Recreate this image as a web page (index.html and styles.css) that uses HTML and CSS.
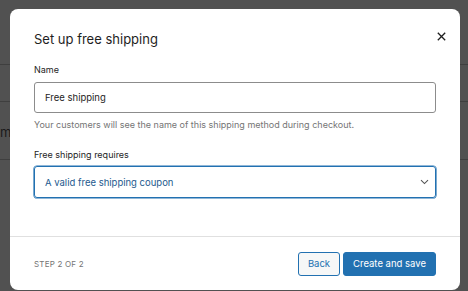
FILE: index.html
```html
<!DOCTYPE html>
<html>
<head>
<meta charset="utf-8">
<link rel="stylesheet" href="styles.css">
</head>
<body>
<div class="page">
  <div class="bg-row bg-r1"></div>
  <div class="bg-row bg-r2"></div>
  <div class="bg-row bg-r3"><span class="bg-clip"><span class="bg-text">method</span></span></div>
  <div class="bg-row bg-r4"></div>
</div>
<div class="overlay">
  <div class="modal" role="dialog">
    <div class="modal-header">
      <h1 class="modal-title">Set up free shipping</h1>
      <button class="close" aria-label="Close">
        <svg width="9" height="9" viewBox="0 0 9 9"><path d="M0.8 0.8L8.2 8.2M8.2 0.8L0.8 8.2" stroke="#1e1e1e" stroke-width="1.3" fill="none"/></svg>
      </button>
    </div>
    <div class="modal-body">
      <label class="field-label">Name</label>
      <div class="input">Free shipping</div>
      <p class="help">Your customers will see the name of this shipping method during checkout.</p>
      <label class="field-label second">Free shipping requires</label>
      <div class="select">
        <span>A valid free shipping coupon</span>
        <svg width="9" height="6" viewBox="0 0 9 6"><path d="M1 1.2L4.5 4.6L8 1.2" stroke="#555" stroke-width="1.1" fill="none"/></svg>
      </div>
    </div>
    <div class="modal-footer">
      <span class="step">Step 2 of 2</span>
      <div class="actions">
        <button class="btn btn-secondary">Back</button>
        <button class="btn btn-primary">Create and save</button>
      </div>
    </div>
  </div>
</div>
</body>
</html>
```

FILE: styles.css
```css
* { box-sizing: border-box; }
html, body { margin: 0; padding: 0; }
body {
  width: 468px;
  height: 291px;
  overflow: hidden;
  background: #515151;
  font-family: Inter, "Noto Sans", sans-serif;
  color: #1e1e1e;
}
.page { display: flex; flex-direction: column; height: 291px; }
.bg-row { border-bottom: 1px solid #3f3f3f; }
.bg-r1 { height: 65px; }
.bg-r2 { height: 37px; }
.bg-r3 { height: 58px; display: flex; align-items: center; }
.bg-r4 { flex: 1; border-bottom: 0; }
.bg-clip { width: 10px; overflow: hidden; white-space: nowrap; display: block; }
.bg-text { font-size: 13px; color: #1a1a1a; }

.overlay { position: absolute; left: 0; top: 0; width: 468px; height: 291px; }
.modal {
  position: absolute;
  left: 10px;
  top: 9px;
  width: 450px;
  height: 281px;
  background: #fff;
  border-radius: 8px;
  display: flex;
  flex-direction: column;
}
.modal-header {
  display: flex;
  align-items: center;
  justify-content: space-between;
  padding: 20px 14px 0 24px;
}
.modal-title {
  margin: 0;
  font-size: 13px;
  line-height: 20px;
  font-weight: 400;
  color: #1e1e1e;
}
.close {
  border: 0;
  background: none;
  padding: 0;
  width: 10px;
  height: 10px;
  display: flex;
  align-items: center;
  justify-content: center;
  margin-top: -6px;
}
.modal-body {
  padding: 15px 24px 0 24px;
  display: flex;
  flex-direction: column;
}
.field-label {
  font-size: 9px;
  line-height: 12px;
  color: #1e1e1e;
  margin-bottom: 6px;
}
.field-label.second { margin-bottom: 5px; }
.input {
  height: 31px;
  border: 1px solid #8c8c8c;
  border-radius: 3px;
  padding: 0 10px;
  font-size: 9.5px;
  display: flex;
  align-items: center;
  color: #1e1e1e;
}
.help {
  margin: 6px 0 18px;
  font-size: 9px;
  line-height: 12px;
  color: #757575;
}
.select {
  height: 32px;
  border: 1px solid #2271b1;
  box-shadow: 0 0 0 0.6px #2271b1;
  border-radius: 3px;
  padding: 0 6px 0 10px;
  font-size: 9.5px;
  color: #1d5a8e;
  display: flex;
  align-items: center;
  justify-content: space-between;
}
.modal-footer {
  margin-top: auto;
  height: 54px;
  border-top: 1px solid #e0e0e0;
  padding: 0 24px;
  display: flex;
  align-items: center;
  justify-content: space-between;
}
.step {
  text-transform: uppercase;
  font-size: 8px;
  letter-spacing: 0.2px;
  color: #757575;
}
.actions { display: flex; gap: 3px; }
.btn {
  height: 24px;
  border-radius: 3px;
  font-family: inherit;
  font-size: 9.5px;
  border: 1px solid #2271b1;
  cursor: pointer;
  padding: 0;
}
.btn-secondary { background: #f6f7f7; color: #2271b1; width: 42px; }
.btn-primary { background: #2271b1; color: #fff; width: 93px; }
```
